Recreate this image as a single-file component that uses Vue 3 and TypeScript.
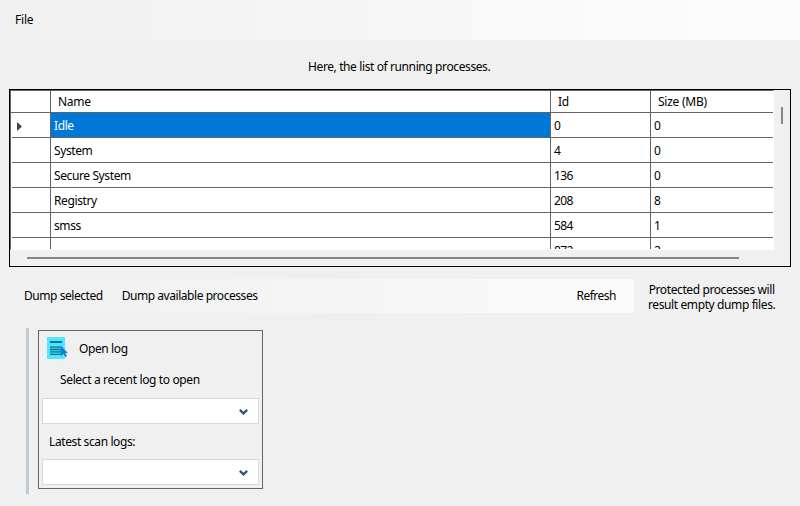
<script setup lang="ts">
interface ProcessRow {
  name: string
  id: string
  size: string
}

const rows: ProcessRow[] = [
  { name: 'Idle', id: '0', size: '0' },
  { name: 'System', id: '4', size: '0' },
  { name: 'Secure System', id: '136', size: '0' },
  { name: 'Registry', id: '208', size: '8' },
  { name: 'smss', id: '584', size: '1' },
  { name: '', id: '872', size: '2' },
]
const selected = 0
</script>

<template>
  <div class="window">
    <nav class="menu"><span>File</span></nav>
    <p class="caption">Here, the list of running processes.</p>

    <section class="grid">
      <div class="view">
        <div class="row head">
          <div class="cell marker"></div>
          <div class="cell name">Name</div>
          <div class="cell id">Id</div>
          <div class="cell size">Size (MB)</div>
        </div>
        <div v-for="(row, i) in rows" :key="row.id" class="row" :class="{ selected: i === selected }">
          <div class="cell marker">
            <svg v-if="i === selected" width="5" height="9" viewBox="0 0 5 9"><path d="M0 0L5 4.5L0 9Z" fill="#444" /></svg>
          </div>
          <div class="cell name">{{ row.name }}</div>
          <div class="cell id">{{ row.id }}</div>
          <div class="cell size">{{ row.size }}</div>
        </div>
      </div>
      <div class="vscroll"><div class="vthumb"></div></div>
      <div class="hscroll"><div class="hthumb"></div></div>
    </section>

    <div class="actions">
      <div class="toolbar">
        <span class="selected-dump">Dump selected</span>
        <span class="available-dump">Dump available processes</span>
        <span class="refresh">Refresh</span>
      </div>
      <div class="note">
        <div>Protected processes will</div>
        <div>result empty dump files.</div>
      </div>
    </div>

    <div class="logs">
      <div class="accent"></div>
      <section class="panel">
        <header class="title">
          <svg width="22" height="22" viewBox="0 0 22 22">
            <rect width="18" height="22" rx="0.7" fill="#50e6ff" />
            <rect x="3" y="9" width="12" height="9" fill="#35bfdc" />
            <g fill="#0b7898">
              <rect x="3" y="4" width="12" height="2" />
              <rect x="3" y="9.6" width="11" height="1" />
              <rect x="3" y="12" width="12" height="1" />
              <rect x="3" y="14.4" width="11" height="1" />
              <rect x="3" y="17" width="12" height="1" />
            </g>
            <path d="M14 9L21 16H18.4L20 19.2L18.2 20L16.7 16.8L14 19Z" fill="#147bd8" />
          </svg>
          <span>Open log</span>
        </header>
        <span class="recent">Select a recent log to open</span>
        <div class="combo">
          <svg width="9" height="6" viewBox="0 0 9 6"><path d="M0.8 0.9L4.5 4.4L8.2 0.9" /></svg>
        </div>
        <span class="latest">Latest scan logs:</span>
        <div class="combo">
          <svg width="9" height="6" viewBox="0 0 9 6"><path d="M0.8 0.9L4.5 4.4L8.2 0.9" /></svg>
        </div>
      </section>
    </div>
  </div>
</template>

<style>
body {
  margin: 0;
  background: #f0f0f0;
}
</style>

<style scoped>
.window {
  width: 800px;
  height: 506px;
  overflow: hidden;
  background: #f0f0f0;
  color: #000;
  font: 12px/16px 'Noto Sans', 'Open Sans', sans-serif;
  letter-spacing: -0.39px;
  white-space: nowrap;
}
.window * {
  box-sizing: border-box;
}
.menu {
  height: 40px;
  padding: 12px 15px;
  background: linear-gradient(90deg, #f0f0f0, #fdfdfd);
  letter-spacing: -0.2px;
}
.caption {
  margin: 0;
  height: 49px;
  padding: 19px 0 0 308px;
}
.grid {
  display: grid;
  grid-template: 160px 16px / 764px 16px;
  width: 782px;
  height: 178px;
  margin-left: 9px;
  border: 1px solid #000;
}
.view {
  overflow: hidden;
  background: #fff;
  border-top: 1px solid #646464;
  border-left: 1px solid #646464;
  border-right: 1px solid #fff;
  border-bottom: 1px solid #fff;
}
.row {
  display: grid;
  grid-template-columns: 39px 500px 100px 1fr;
  height: 25px;
  margin-left: 1px;
}
.cell {
  padding: 5px 3px 3px;
  border-right: 1px solid #646464;
  border-bottom: 1px solid #646464;
}
.cell.id {
  letter-spacing: -0.6px;
}
.head {
  grid-template-columns: 40px 500px 100px 1fr;
  height: 22px;
  margin-left: 0;
  letter-spacing: -0.25px;
}
.head .cell {
  padding: 3px 7px 2px;
  letter-spacing: -0.25px;
}
.row .cell.size {
  border-right: 0;
}
.marker svg {
  display: block;
  margin: 4px 0 0 2px;
}
.selected .name {
  background: #0078d7;
  color: #fff;
}
.vscroll {
  padding: 17px 0 0 7px;
}
.vthumb {
  width: 2px;
  height: 17px;
  background: #868686;
}
.hscroll {
  padding: 7px 0 0 17px;
}
.hthumb {
  width: 712px;
  height: 2px;
  background: #868686;
}
.actions {
  display: flex;
  padding: 12px 0 0 9px;
}
.toolbar {
  display: flex;
  width: 625px;
  height: 34px;
  padding: 9px 18px 0 15px;
  background: linear-gradient(90deg, #f0f0f0, #fafafa);
}
.selected-dump {
  letter-spacing: -0.45px;
}
.available-dump {
  margin-left: 19px;
  letter-spacing: -0.45px;
}
.refresh {
  margin-left: auto;
  letter-spacing: -0.5px;
}
.note {
  margin: 2px 0 0 14px;
  padding-top: 0.5px;
  line-height: 15px;
  text-align: center;
}
.logs {
  display: flex;
  gap: 9px;
  padding: 15px 0 0 26px;
}
.accent {
  width: 3px;
  height: 166px;
  background: #bfcad2;
}
.panel {
  display: flex;
  flex-direction: column;
  width: 225px;
  height: 159px;
  margin-top: 2px;
  padding: 6px 3px 3px;
  border: 1px solid #646464;
}
.title {
  display: flex;
  gap: 10px;
  height: 35px;
  padding-left: 5px;
}
.title span {
  margin-top: 4px;
}
.recent {
  height: 26px;
  padding-left: 18px;
  letter-spacing: -0.36px;
}
.combo {
  display: flex;
  justify-content: flex-end;
  width: 217px;
  height: 26px;
  padding: 10px 10px 0 0;
  border: 1px solid #d5dae1;
  background: #fff;
}
.combo path {
  fill: none;
  stroke: #3b5069;
  stroke-width: 2.2;
}
.latest {
  height: 35px;
  padding: 10px 0 0 7px;
}
</style>
